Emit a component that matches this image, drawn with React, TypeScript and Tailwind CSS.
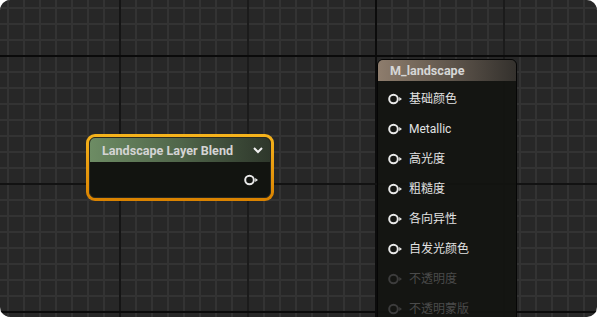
import React from "react";

const Pin = ({ dim = false }: { dim?: boolean }) => (
  <svg width="15" height="12" viewBox="0 0 15 12" className="shrink-0">
    <circle cx="5.5" cy="6" r="4.3" fill="none" stroke={dim ? "#3c3c3c" : "#e8e8e8"} strokeWidth="2" />
    <polygon points="11.2,4 14,6 11.2,8" fill={dim ? "#3c3c3c" : "#e8e8e8"} />
  </svg>
);

const Grid = () => (
  <svg className="absolute inset-0" width="597" height="317">
    <defs>
      <pattern id="fine" x="7" y="7" width="16" height="16" patternUnits="userSpaceOnUse">
        <rect x="0" y="0" width="16" height="2" fill="#333333" />
        <rect x="0" y="0" width="2" height="16" fill="#333333" />
      </pattern>
    </defs>
    <rect width="597" height="317" fill="#272727" />
    <rect width="597" height="317" fill="url(#fine)" />
    {/* major lines */}
    <rect x="119" y="0" width="2" height="317" fill="#151515" />
    <rect x="247" y="0" width="2" height="317" fill="#1b1b1b" />
    <rect x="375" y="0" width="2" height="317" fill="#0c0c0c" />
    <rect x="503" y="0" width="2" height="317" fill="#1b1b1b" />
    <rect x="0" y="55" width="597" height="2" fill="#0a0a0a" />
    <rect x="0" y="183" width="597" height="2" fill="#121212" />
    <rect x="0" y="311" width="597" height="2" fill="#0a0a0a" />
  </svg>
);

const rows = [
  { label: "基础颜色" },
  { label: "Metallic" },
  { label: "高光度" },
  { label: "粗糙度" },
  { label: "各向异性" },
  { label: "自发光颜色" },
  { label: "不透明度", dim: true },
  { label: "不透明蒙版", dim: true },
];

export default function App() {
  return (
    <div className="w-[597px] h-[317px] bg-white">
      <div
        className="relative w-[597px] h-[317px] overflow-hidden rounded-[10px]"
        style={{ fontFamily: "Roboto, 'Noto Sans CJK SC', sans-serif" }}
      >
        <Grid />

        {/* Landscape Layer Blend node (selected) */}
        <div className="absolute left-[86px] top-[134px] w-[188px] h-[67px] rounded-[9px] p-[3px] bg-gradient-to-b from-[#f6b41c] to-[#d98200]">
          <div className="flex flex-col h-full rounded-[6px] overflow-hidden bg-[#121410] border border-[#2a2a22]">
            <div className="h-[24px] flex items-center justify-between pl-[12px] pr-[6px] pt-[3px] bg-gradient-to-r from-[#6d8c64] via-[#50664a] to-[#2e372b]">
              <span className="text-[12.6px] font-bold text-[#d4d4d4]">Landscape Layer Blend</span>
              <svg width="12" height="10" viewBox="0 0 12 10" className="-mt-[3px]">
                <path d="M2 3 L6 7 L10 3" fill="none" stroke="#f2f2f2" strokeWidth="2" />
              </svg>
            </div>
            <div className="flex-1 flex items-center justify-end pr-[11px] pt-[1px]">
              <Pin />
            </div>
          </div>
        </div>

        {/* M_landscape node */}
        <div className="absolute left-[377px] top-[59px] w-[140px] h-[270px] rounded-t-[6px] border border-[#060606] bg-[#131411]/95 overflow-hidden">
          <div className="h-[21px] flex items-center pl-[12px] pt-[1px] bg-gradient-to-r from-[#8e7d6d] via-[#62584e] to-[#34312d]">
            <span className="text-[12.6px] font-bold text-[#d6d6d6]">M_landscape</span>
          </div>
          <div className="flex flex-col pt-[3px]">
            {rows.map((r) => (
              <div key={r.label} className="h-[30px] flex items-center gap-[6px] pl-[10px]">
                <Pin dim={r.dim} />
                <span className={`text-[12px] ${r.dim ? "text-[#4a4a4a]" : "text-[#e2e2e2]"}`}>{r.label}</span>
              </div>
            ))}
          </div>
        </div>
      </div>
    </div>
  );
}
